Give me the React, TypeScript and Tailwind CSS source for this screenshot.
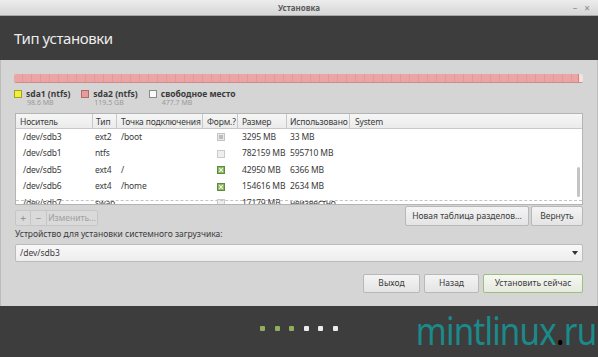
import React from "react";

type Check = "gray" | "empty" | "green";
type Row = { dev: string; type: string; mount: string; fmt: Check; size: string; used: string };

const rows: Row[] = [
  { dev: "/dev/sdb3", type: "ext2", mount: "/boot", fmt: "gray", size: "3295 MB", used: "33 MB" },
  { dev: "/dev/sdb1", type: "ntfs", mount: "", fmt: "empty", size: "782159 MB", used: "595710 MB" },
  { dev: "/dev/sdb5", type: "ext4", mount: "/", fmt: "green", size: "42950 MB", used: "6366 MB" },
  { dev: "/dev/sdb6", type: "ext4", mount: "/home", fmt: "green", size: "154616 MB", used: "2634 MB" },
  { dev: "/dev/sdb7", type: "swap", mount: "", fmt: "empty", size: "17179 MB", used: "неизвестно" },
];

function CheckBox({ kind }: { kind: Check }) {
  if (kind === "green")
    return (
      <div className="w-[8px] h-[8px] border border-[#5e8a3a] bg-[#8cb864] flex items-center justify-center">
        <svg width="6" height="6" viewBox="0 0 6 6">
          <path d="M1.2 1.2 L4.8 4.8 M4.8 1.2 L1.2 4.8" stroke="#f4f8ee" strokeWidth="1.1" />
        </svg>
      </div>
    );
  if (kind === "gray")
    return (
      <div className="w-[8px] h-[8px] border border-[#c4c4c4] bg-[#e8e8e8] flex items-center justify-center">
        <div className="w-[4px] h-[4px] bg-[#bcbcbc]" />
      </div>
    );
  return <div className="w-[8px] h-[8px] border border-[#cacaca] bg-[#eeeeee]" />;
}

const btn =
  "flex items-center justify-center border border-[#b8b8b8] rounded-[2px] bg-gradient-to-b from-[#f4f4f4] to-[#e4e4e4] whitespace-nowrap";

export default function App() {
  const font = { fontFamily: '"Noto Sans", "Open Sans", sans-serif' };
  return (
    <div className="w-[598px] h-[357px] flex flex-col overflow-hidden bg-[#3c3c3c]" style={font}>
      {/* Title bar */}
      <div className="h-[16px] shrink-0 relative flex items-center justify-center bg-gradient-to-b from-[#ececec] to-[#d6d6d6] border-b border-[#a8a8a8]">
        <span className="text-[8px] font-bold text-[#5c5c5c] leading-none">Установка</span>
        <div className="absolute right-[8px] top-0 h-full flex items-center gap-[7px] text-[#8a8a8a]">
          <span className="text-[9px] leading-none">–</span>
          <span className="text-[10px] leading-none">×</span>
        </div>
      </div>

      {/* Dark header */}
      <div className="h-[44px] shrink-0 bg-[#3d3d3d] flex items-center pl-[14px]">
        <span className="text-[15px] text-[#ececec] tracking-[-0.4px] leading-none">Тип установки</span>
      </div>

      {/* Body */}
      <div className="h-[246px] shrink-0 bg-[#d5d5d5] px-[14px] pt-[14px] flex flex-col border-x border-[#bcbcbc]">
        {/* Partition bar */}
        <div className="h-[9px] w-[569px] -ml-[1px] flex rounded-[2px] overflow-hidden border-b border-[#cf8a8a]">
          <div className="flex-1 bg-[repeating-linear-gradient(90deg,#eba5a5_0px,#eba5a5_8px,#e29999_8px,#e29999_9px)]" />
          <div className="w-[1px] bg-[#d88080]" />
          <div className="w-[4px] bg-[#f2e2e2]" />
        </div>

        {/* Legend */}
        <div className="mt-[6px] flex gap-[11px] -ml-[1px]">
          {[
            { c: "bg-[#f0ef3c] border-[#a8a020]", n: "sda1 (ntfs)", s: "98.6 MB" },
            { c: "bg-[#e99a9a] border-[#b06a6a]", n: "sda2 (ntfs)", s: "119.5 GB" },
            { c: "bg-[#fafafa] border-[#8a8a8a]", n: "свободное место", s: "477.7 MB" },
          ].map((it) => (
            <div key={it.n} className="flex gap-[4px]">
              <div className={`w-[8px] h-[8px] mt-[1px] border ${it.c}`} />
              <div className="flex flex-col">
                <span className="text-[8.5px] font-bold text-[#3c3c3c] leading-[10px] whitespace-nowrap">{it.n}</span>
                <span className="text-[7px] text-[#9a9a9a] leading-[8px] pl-[1px]">{it.s}</span>
              </div>
            </div>
          ))}
        </div>

        {/* Table */}
        <div className="mt-[6px] h-[92px] bg-white border border-[#b4b4b4] relative overflow-hidden text-[8.5px] tracking-[-0.15px] text-[#3a3a3a]">
          <div className="h-[15px] flex bg-gradient-to-b from-[#f6f6f6] to-[#ebebeb] border-b border-[#c8c8c8] leading-[15px] whitespace-nowrap">
            <div className="w-[77px] pl-[4px] border-r border-[#c8c8c8] overflow-hidden">Носитель</div>
            <div className="w-[24px] pl-[3px] border-r border-[#c8c8c8] overflow-hidden">Тип</div>
            <div className="w-[86px] pl-[4px] border-r border-[#c8c8c8] overflow-hidden">Точка подключения</div>
            <div className="w-[35px] pl-[4px] border-r border-[#c8c8c8] overflow-hidden">Форм.?</div>
            <div className="w-[49px] pl-[4px] border-r border-[#c8c8c8] overflow-hidden">Размер</div>
            <div className="w-[63px] pl-[3px] border-r border-[#c8c8c8] overflow-hidden">Использовано</div>
            <div className="flex-1 pl-[5px]">System</div>
          </div>
          {rows.map((r) => (
            <div key={r.dev} className="h-[16.5px] flex items-center whitespace-nowrap">
              <div className="w-[77px] pl-[7px]">{r.dev}</div>
              <div className="w-[24px] pl-[2px]">{r.type}</div>
              <div className="w-[86px] pl-[4px]">{r.mount}</div>
              <div className="w-[35px] flex justify-center">
                <CheckBox kind={r.fmt} />
              </div>
              <div className="w-[49px] pl-[4px]">{r.size}</div>
              <div className="w-[63px] pl-[3px]">{r.used}</div>
              <div className="flex-1" />
            </div>
          ))}
          <div className="absolute left-0 right-0 bottom-[3px] border-b border-dashed border-[#c4c4c4]" />
          <div className="absolute right-[2px] top-[53px] w-[3px] h-[30px] rounded-full bg-[#c4c4c4]" />
        </div>

        {/* Buttons row */}
        <div className="mt-[1px] h-[20px] flex items-end justify-between">
          <div className="flex h-[16px] text-[8.5px] text-[#a0a0a0] whitespace-nowrap">
            <div className="w-[16px] flex items-center justify-center border border-[#c6c6c6] bg-[#dadada] rounded-l-[2px] text-[10px] text-[#909090]">+</div>
            <div className="w-[16px] flex items-center justify-center border-y border-r border-[#c6c6c6] bg-[#dadada] text-[10px] text-[#909090]">−</div>
            <div className="w-[51px] flex items-center justify-center border-y border-r border-[#c6c6c6] bg-[#dadada] rounded-r-[2px]">Изменить...</div>
          </div>
          <div className="flex gap-[2px] h-[20px] text-[8.5px] text-[#3c3c3c]">
            <div className={`w-[124px] ${btn}`}>Новая таблица разделов...</div>
            <div className={`w-[52px] ${btn}`}>Вернуть</div>
          </div>
        </div>

        {/* Label */}
        <div className="mt-[2px] text-[8.5px] leading-[12px] text-[#3c3c3c]">
          Устройство для установки системного загрузчика:
        </div>

        {/* Combo */}
        <div className="mt-[4px] h-[18px] flex items-center justify-between border border-[#bcbcbc] rounded-[2px] bg-gradient-to-b from-[#f8f8f8] to-[#eeeeee] pl-[4px] pr-[4px] text-[8.5px] text-[#3c3c3c]">
          <span>/dev/sdb3</span>
          <svg width="6" height="4" viewBox="0 0 6 4">
            <path d="M0 0 L6 0 L3 4 Z" fill="#333" />
          </svg>
        </div>

        {/* Bottom buttons */}
        <div className="mt-[12px] h-[19px] flex justify-end gap-[4px] text-[8.5px] text-[#3c3c3c]">
          <div className={`w-[57px] ${btn}`}>Выход</div>
          <div className={`w-[55px] ${btn}`}>Назад</div>
          <div className="w-[100px] flex items-center justify-center border border-[#9cc07c] rounded-[2px] bg-gradient-to-b from-[#f6f8f2] to-[#e6eadf] whitespace-nowrap">
            Установить сейчас
          </div>
        </div>
      </div>

      {/* Footer */}
      <div className="flex-1 relative bg-[#3d3d3d] pt-[20px] flex justify-center">
        <div className="flex gap-[9.5px] h-[5px]">
          <div className="w-[5px] h-[5px] rounded-[1px] bg-[#8fae5e]" />
          <div className="w-[5px] h-[5px] rounded-[1px] bg-[#8fae5e]" />
          <div className="w-[5px] h-[5px] rounded-[1px] bg-[#8fae5e]" />
          <div className="w-[5px] h-[5px] rounded-[1px] bg-[#ececec]" />
          <div className="w-[5px] h-[5px] rounded-[1px] bg-[#ececec]" />
          <div className="w-[5px] h-[5px] rounded-[1px] bg-[#ececec]" />
        </div>
        <div className="absolute right-[2px] top-[4px] text-[39px] leading-none font-normal text-[#1a8a8a] tracking-[-1px] scale-x-[0.85] origin-right whitespace-nowrap">
          mintlinux<span className="text-black">.</span>ru
        </div>
      </div>
    </div>
  );
}
